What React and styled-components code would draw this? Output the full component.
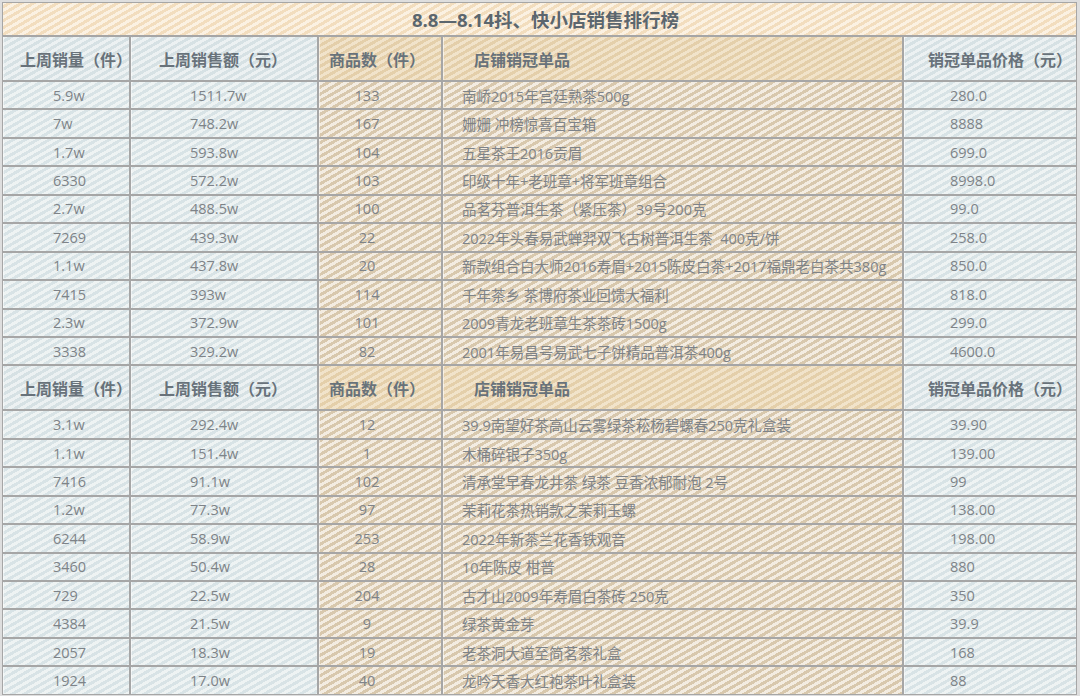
import React from "react";
import styled, { createGlobalStyle, css } from "styled-components";

const Global = createGlobalStyle`
  html, body { margin: 0; padding: 0; background: #dedede; }
  body { font-family: "Open Sans", "Noto Sans CJK SC", sans-serif; }
`;

const stripes = (a, b) => css`
  background: repeating-linear-gradient(150deg, ${a} 0 3px, ${b} 3px 6px);
  background-attachment: fixed;
`;

const tones = {
  blue: stripes("#d8e3e6", "#eef3f3"),
  sand: stripes("#d8c8ad", "#f3ece1"),
  blueHead: stripes("#d6e1e4", "#ecf1f2"),
  sandHead: stripes("#e4cfaa", "#f1e3ca"),
  title: stripes("#f2ddbe", "#fbf1e2"),
};

const Page = styled.div`
  padding: 2px;
`;

const Board = styled.div`
  width: 1073px;
  padding: 1px;
  background: #a6a6a6;
  display: grid;
  grid-template-columns: 126px 186px 122px 459px 172px;
  gap: 2px;
`;

const Title = styled.div`
  grid-column: 1 / -1;
  height: 32px;
  ${tones.title};
  display: flex;
  align-items: center;
  justify-content: center;
  padding-left: 12px;
  font-family: "Open Sans", "Noto Sans CJK SC", sans-serif;
  font-weight: 700;
  font-size: 18.5px;
  color: #5b666e;
`;

const Cell = styled.div`
  height: 26.45px;
  ${(p) => tones[p.$tone]};
  display: flex;
  align-items: center;
  justify-content: ${(p) => (p.$center ? "center" : "flex-start")};
  padding-left: ${(p) => p.$padL || 0}px;
  padding-right: ${(p) => p.$padR || 0}px;
  font-size: 14.5px;
  color: #7e8388;
  white-space: pre;
  overflow: hidden;
  box-shadow: inset 1px 0 0 rgba(255, 255, 255, 0.55);
`;

const HeadCell = styled.div`
  height: 43px;
  ${(p) => tones[p.$tone]};
  display: flex;
  align-items: center;
  padding-left: ${(p) => p.$padL}px;
  font-family: "Noto Sans CJK SC", sans-serif;
  font-weight: 700;
  font-size: 16px;
  color: #68727a;
  white-space: pre;
  box-shadow: inset 1px 0 0 rgba(255, 255, 255, 0.55);
`;

const columns = [
  { tone: "blue", head: "上周销量（件）", headPad: 17, padL: 50 },
  { tone: "blue", head: "上周销售额（元）", headPad: 28, padL: 59 },
  { tone: "sand", head: "商品数（件）", headPad: 10, center: true, padR: 26 },
  { tone: "sand", head: "店铺销冠单品", headPad: 31, padL: 19 },
  { tone: "blue", head: "销冠单品价格（元）", headPad: 24, padL: 46 },
];

const tableA = [
  ["5.9w", "1511.7w", "133", "南峤2015年宫廷熟茶500g", "280.0"],
  ["7w", "748.2w", "167", "姗姗 冲榜惊喜百宝箱", "8888"],
  ["1.7w", "593.8w", "104", "五星茶王2016贡眉", "699.0"],
  ["6330", "572.2w", "103", "印级十年+老班章+将军班章组合", "8998.0"],
  ["2.7w", "488.5w", "100", "品茗芬普洱生茶（紧压茶）39号200克", "99.0"],
  ["7269", "439.3w", "22", "2022年头春易武蝉羿双飞古树普洱生茶  400克/饼", "258.0"],
  ["1.1w", "437.8w", "20", "新款组合白大师2016寿眉+2015陈皮白茶+2017福鼎老白茶共380g", "850.0"],
  ["7415", "393w", "114", "千年茶乡 茶博府茶业回馈大福利", "818.0"],
  ["2.3w", "372.9w", "101", "2009青龙老班章生茶茶砖1500g", "299.0"],
  ["3338", "329.2w", "82", "2001年易昌号易武七子饼精品普洱茶400g", "4600.0"],
];

const tableB = [
  ["3.1w", "292.4w", "12", "39.9南望好茶高山云雾绿茶菘杨碧螺春250克礼盒装", "39.90"],
  ["1.1w", "151.4w", "1", "木桶碎银子350g", "139.00"],
  ["7416", "91.1w", "102", "清承堂早春龙井茶 绿茶 豆香浓郁耐泡 2号", "99"],
  ["1.2w", "77.3w", "97", "茉莉花茶热销款之茉莉玉螺", "138.00"],
  ["6244", "58.9w", "253", "2022年新茶兰花香铁观音", "198.00"],
  ["3460", "50.4w", "28", "10年陈皮 柑普", "880"],
  ["729", "22.5w", "204", "古才山2009年寿眉白茶砖 250克", "350"],
  ["4384", "21.5w", "9", "绿茶黄金芽", "39.9"],
  ["2057", "18.3w", "19", "老茶洞大道至简茗茶礼盒", "168"],
  ["1924", "17.0w", "40", "龙吟天香大红袍茶叶礼盒装", "88"],
];

function Section({ rows, tag }) {
  return (
    <>
      {columns.map((c, i) => (
        <HeadCell key={`${tag}-h-${i}`} $tone={`${c.tone}Head`} $padL={c.headPad}>
          {c.head}
        </HeadCell>
      ))}
      {rows.map((r, ri) =>
        r.map((v, ci) => {
          const c = columns[ci];
          return (
            <Cell
              key={`${tag}-${ri}-${ci}`}
              $tone={c.tone}
              $center={c.center}
              $padL={c.padL}
              $padR={c.padR}
            >
              {v}
            </Cell>
          );
        })
      )}
    </>
  );
}

export default function App() {
  return (
    <Page>
      <Global />
      <Board>
        <Title>8.8—8.14抖、快小店销售排行榜</Title>
        <Section rows={tableA} tag="a" />
        <Section rows={tableB} tag="b" />
      </Board>
    </Page>
  );
}
